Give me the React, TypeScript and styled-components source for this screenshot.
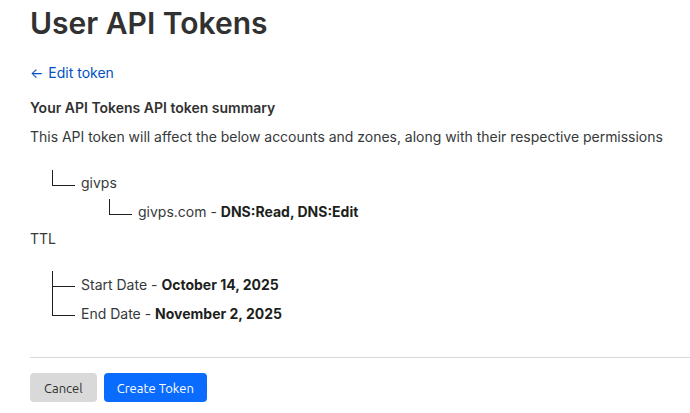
import React from "react";
import styled, { createGlobalStyle } from "styled-components";

const Global = createGlobalStyle`
  html, body { margin: 0; padding: 0; background: #ffffff; }
  body { font-family: Inter, "Noto Sans", Arial, sans-serif; color: #36393a; }
  * { box-sizing: border-box; }
`;

const Page = styled.div`
  padding: 0 0 0 30px;
  width: 690px;
`;

const Title = styled.h1`
  margin: 5px 0 0;
  font-size: 30px;
  line-height: 36px;
  font-weight: 600;
  color: #313131;
`;

const BackLink = styled.a`
  display: inline-flex;
  align-items: center;
  gap: 5px;
  margin-top: 22px;
  font-size: 14px;
  line-height: 20px;
  color: #0051c3;
  text-decoration: none;
  cursor: pointer;
`;

const Block = styled.div`
  display: flex;
  flex-direction: column;
`;

const Heading = styled.div`
  margin-top: 15px;
  font-size: 14px;
  line-height: 20px;
  font-weight: 600;
  color: #313131;
`;

const Text = styled.div<{ $mt: number }>`
  margin-top: ${(p) => p.$mt}px;
  font-size: 14px;
  line-height: 20px;
  color: #36393a;
  letter-spacing: -0.02px;
`;

const TreeList = styled.ul<{ $mt: number; $indent: number }>`
  list-style: none;
  margin: ${(p) => p.$mt}px 0 0 ${(p) => p.$indent}px;
  padding: 0;
  display: flex;
  flex-direction: column;
  gap: 9px;
`;

const TreeItem = styled.li<{ $top: number; $h: number }>`
  position: relative;
  padding-left: 29px;
  font-size: 14px;
  line-height: 20px;
  color: #36393a;
  &::before {
    content: "";
    position: absolute;
    left: 0;
    top: ${(p) => p.$top}px;
    width: 22px;
    height: ${(p) => p.$h}px;
    border-left: 1px solid #1d1f20;
    border-bottom: 1px solid #1d1f20;
  }
`;

const Strong = styled.b`
  font-weight: 700;
  color: #1d1f20;
`;

const Divider = styled.hr`
  margin: 33px 0 0;
  border: 0;
  border-top: 1px solid #d9d9d9;
  height: 0;
`;

const Actions = styled.div`
  display: flex;
  gap: 7px;
  margin-top: 15px;
`;

const Button = styled.button<{ $primary?: boolean }>`
  height: 29px;
  padding: 0 ${(p) => (p.$primary ? 13 : 14)}px;
  border: 0;
  border-radius: 4px;
  font-family: Ubuntu, "Noto Sans", "Open Sans", sans-serif;
  font-size: 13px;
  background: ${(p) => (p.$primary ? "#0a6cff" : "#d9d9d9")};
  color: ${(p) => (p.$primary ? "#ffffff" : "#313131")};
  cursor: pointer;
`;

export default function App() {
  return (
    <>
      <Global />
      <Page>
        <Title>User API Tokens</Title>
        <BackLink>
          <span>←</span>
          <span>Edit token</span>
        </BackLink>
        <Block>
          <Heading>Your API Tokens API token summary</Heading>
          <Text $mt={9}>
            This API token will affect the below accounts and zones, along with their respective permissions
          </Text>
          <TreeList $mt={26} $indent={22}>
            <TreeItem $top={-3} $h={15}>givps</TreeItem>
          </TreeList>
          <TreeList $mt={9} $indent={79}>
            <TreeItem $top={-3} $h={15}>
              givps.com - <Strong>DNS:Read, DNS:Edit</Strong>
            </TreeItem>
          </TreeList>
          <Text $mt={7}>TTL</Text>
          <TreeList $mt={26} $indent={22}>
            <TreeItem $top={-4} $h={15}>
              Start Date - <Strong>October 14, 2025</Strong>
            </TreeItem>
            <TreeItem $top={-19} $h={30}>
              End Date - <Strong>November 2, 2025</Strong>
            </TreeItem>
          </TreeList>
        </Block>
        <Divider />
        <Actions>
          <Button>Cancel</Button>
          <Button $primary>Create Token</Button>
        </Actions>
      </Page>
    </>
  );
}
